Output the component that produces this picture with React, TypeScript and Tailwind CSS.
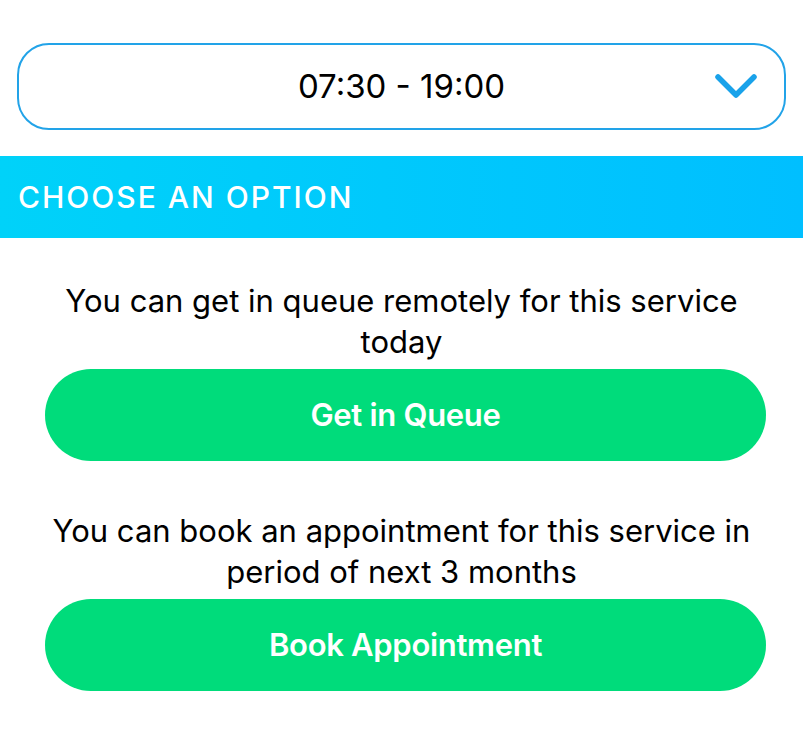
import React from "react";

function ChevronDown() {
  return (
    <svg width="44" height="28" viewBox="0 0 44 28" fill="none">
      <path
        d="M4 4 L22 22 L40 4"
        stroke="#19a2ea"
        strokeWidth="5.5"
        strokeLinecap="round"
        strokeLinejoin="round"
      />
    </svg>
  );
}

type OptionProps = {
  text: string;
  label: string;
};

function Option({ text, label }: OptionProps) {
  return (
    <div className="flex flex-col">
      <p className="mx-[40px] text-center text-[31px] leading-[41px] text-black">{text}</p>
      <button className="ml-[45px] mr-[37px] mt-[7px] flex h-[92px] items-center justify-center rounded-full bg-[#00dc7b] text-[31px] font-semibold tracking-[-0.3px] text-white">
        {label}
      </button>
    </div>
  );
}

export default function App() {
  return (
    <div
      className="min-h-[733px] w-full bg-white pt-[43px]"
      style={{ fontFamily: "Inter, 'Noto Sans', sans-serif" }}
    >
      <div className="mx-[17px] flex h-[87px] items-center rounded-[32px] border-2 border-[#22a3e8]">
        <div className="flex-1 pl-[70px] text-center text-[33px] text-black">07:30 - 19:00</div>
        <div className="flex w-[70px] items-center justify-start">
          <ChevronDown />
        </div>
      </div>

      <div className="mt-[26px] flex h-[82px] items-center bg-gradient-to-r from-[#00d2f9] to-[#00bfff] px-[18px]">
        <span className="text-[30px] font-medium tracking-[2px] text-white">CHOOSE AN OPTION</span>
      </div>

      <div className="mt-[42px]">
        <Option text="You can get in queue remotely for this service today" label="Get in Queue" />
      </div>
      <div className="mt-[49px]">
        <Option
          text="You can book an appointment for this service in period of next 3 months"
          label="Book Appointment"
        />
      </div>
    </div>
  );
}
